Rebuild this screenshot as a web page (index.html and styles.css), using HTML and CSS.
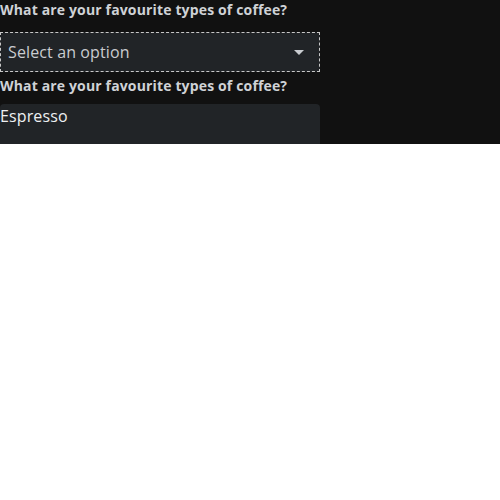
FILE: index.html
```html
<!DOCTYPE html>
<html>
<head>
<meta charset="utf-8">
<link rel="stylesheet" href="styles.css">
</head>
<body>
<div class="panel">
  <div class="field">
    <label class="label">What are your favourite types of coffee?</label>
    <div class="select">
      <span class="placeholder">Select an option</span>
      <span class="arrow"></span>
    </div>
  </div>
  <div class="field">
    <label class="label">What are your favourite types of coffee?</label>
    <div class="textbox">Espresso</div>
  </div>
</div>
</body>
</html>
```
FILE: styles.css
```css
html, body {
  margin: 0;
  padding: 0;
  background: #ffffff;
}
.panel {
  width: 500px;
  height: 144px;
  overflow: hidden;
  background: #111111;
  font-family: "Open Sans", "Noto Sans", sans-serif;
}
.field {
  width: 320px;
  display: flex;
  flex-direction: column;
}
.label {
  display: block;
  font-size: 14px;
  font-weight: 700;
  line-height: 20px;
  letter-spacing: 0.15px;
  color: #cfd2d6;
  margin-bottom: 12px;
}
.field + .field .label {
  margin-top: 4px;
  margin-bottom: 8px;
}
.select {
  box-sizing: border-box;
  height: 40px;
  border: 1px dashed #c8c8c8;
  background: #212427;
  display: flex;
  align-items: center;
  justify-content: space-between;
  padding: 0 15px 0 7px;
}
.placeholder {
  font-size: 16px;
  line-height: 24px;
  letter-spacing: 0.12px;
  color: #c9ccd0;
}
.arrow {
  width: 0;
  height: 0;
  border-left: 5px solid transparent;
  border-right: 5px solid transparent;
  border-top: 5px solid #c9ccd0;
}
.textbox {
  box-sizing: border-box;
  height: 48px;
  background: #212427;
  border-radius: 4px;
  font-size: 16px;
  line-height: 24px;
  letter-spacing: 0.12px;
  color: #eef0f2;
  padding: 0;
}
```
